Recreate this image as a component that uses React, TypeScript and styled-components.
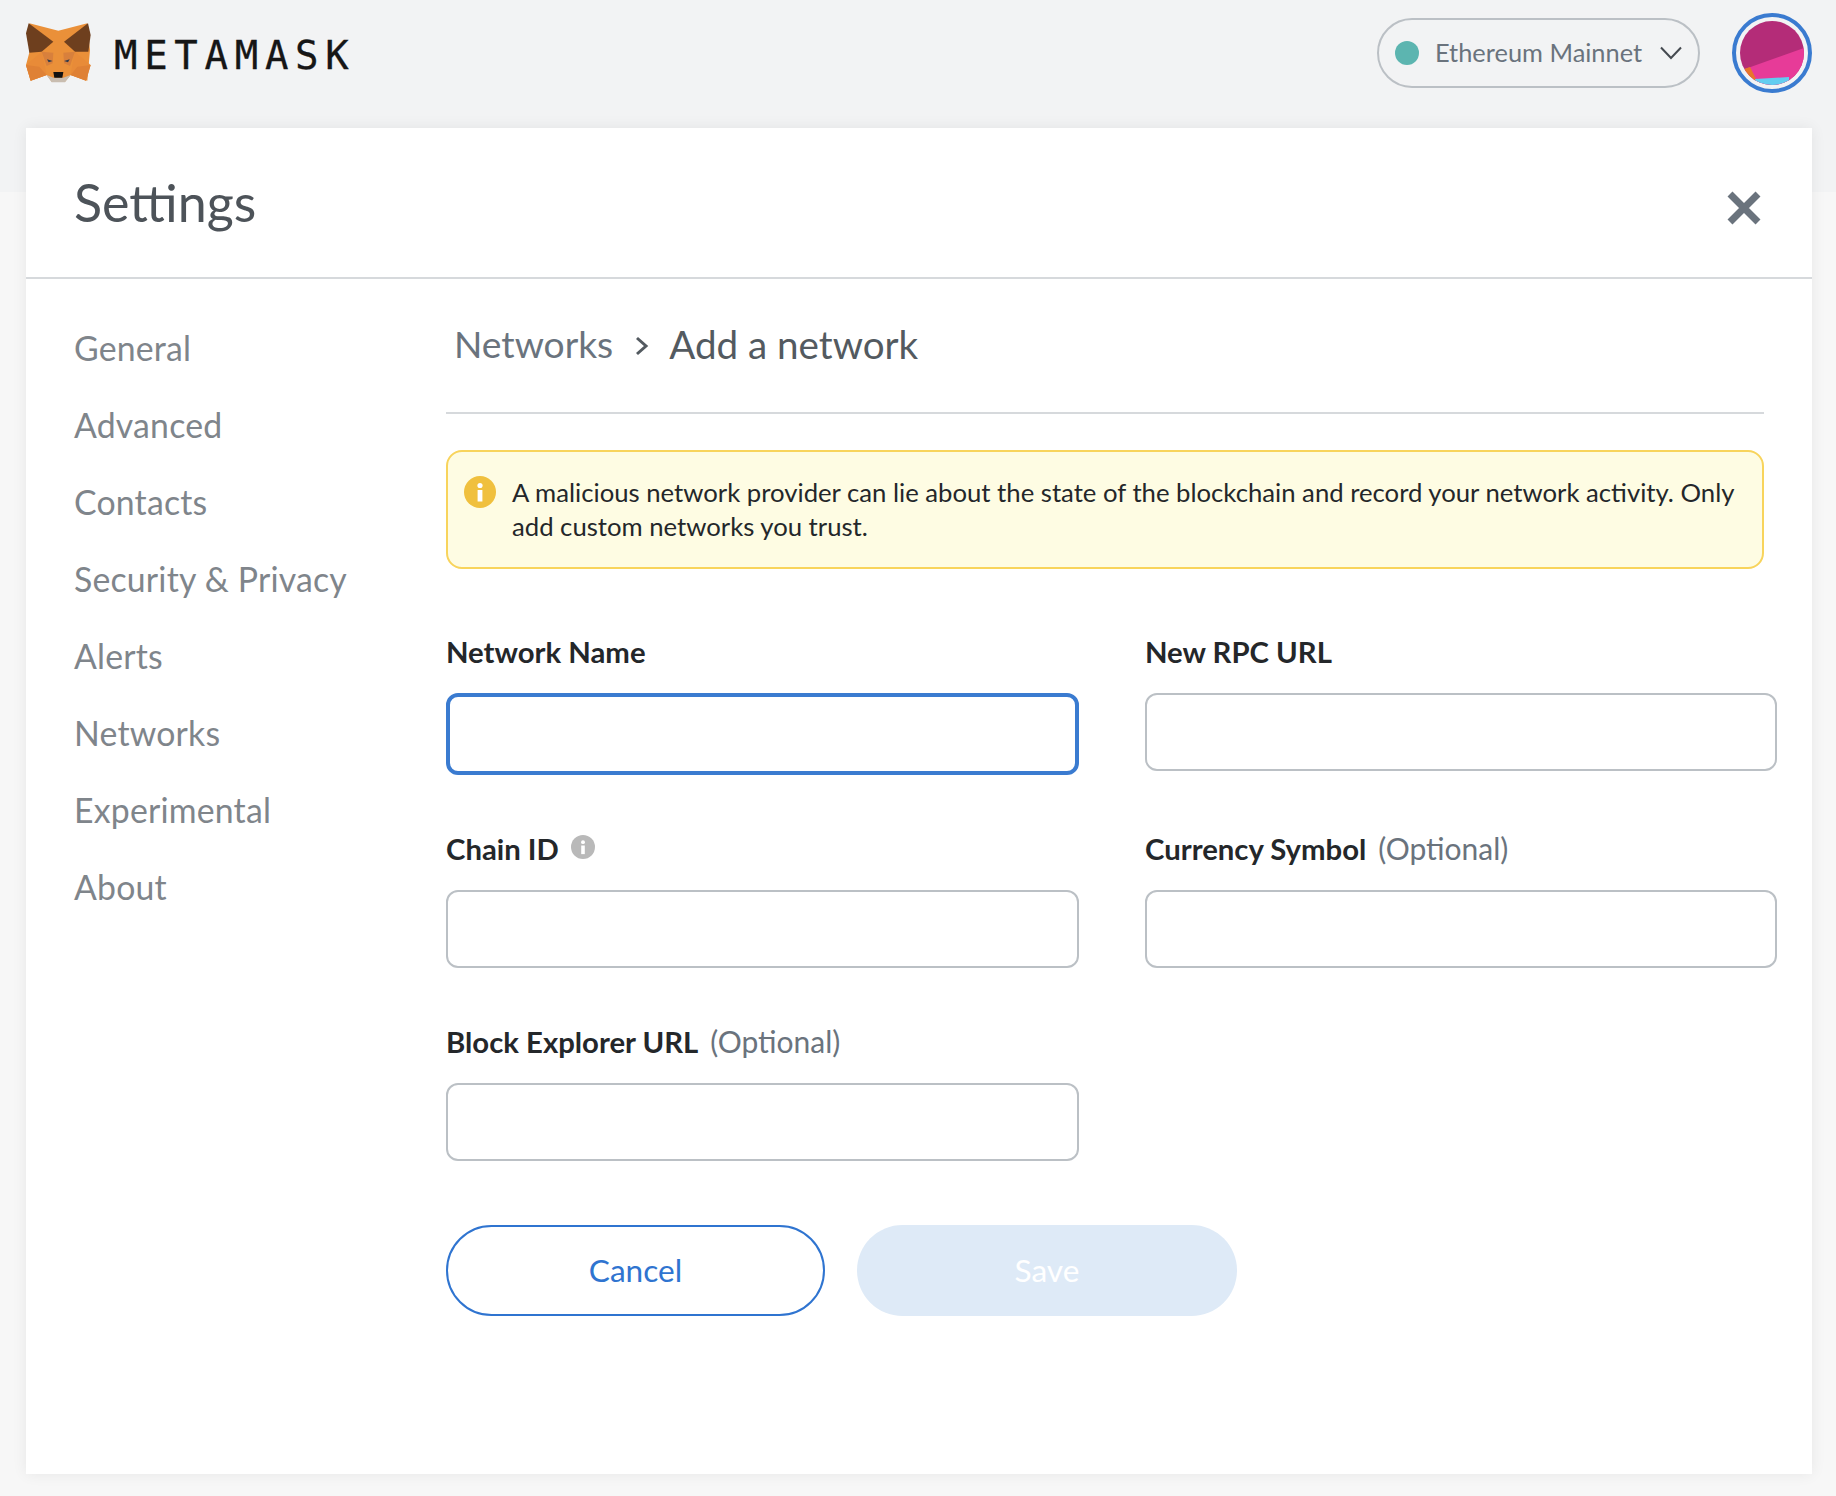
import React from "react";
import styled, { createGlobalStyle } from "styled-components";

const Global = createGlobalStyle`
  html, body { margin: 0; padding: 0; }
  body { background: #f7f7f7; font-family: "Lato", "Liberation Sans", sans-serif; color: #24272a; }
  * { box-sizing: border-box; }
`;

const Page = styled.div`
  width: 1836px;
  height: 1496px;
  overflow: hidden;
`;
const HeaderBand = styled.header`
  height: 192px;
  background: #f2f3f4;
  display: flex;
  align-items: flex-start;
  justify-content: space-between;
  padding: 13px 24px 0 26px;
`;
const Brand = styled.div`
  display: flex;
  align-items: center;
  height: 80px;
  gap: 23px;
`;
const Wordmark = styled.span`
  font-family: "DejaVu Sans Mono", monospace;
  font-size: 39px;
  letter-spacing: 6.7px;
  margin-top: 4px;
  color: #161616;
  -webkit-text-stroke: 0.3px #161616;
`;
const HeaderRight = styled.div`
  display: flex;
  align-items: center;
  gap: 32px;
  height: 80px;
`;
const NetworkPill = styled.div`
  width: 323px;
  height: 70px;
  border: 2px solid #bbc0c5;
  border-radius: 35px;
  display: flex;
  align-items: center;
  padding-left: 16px;
  font-size: 25.4px;
  color: #6a737d;
`;
const NetworkDot = styled.span`
  width: 24px;
  height: 24px;
  border-radius: 50%;
  background: #5cb5b0;
  margin-right: 16px;
`;
const NetworkName = styled.span`
  width: 225px;
  margin-top: -3px;
`;
const AvatarRing = styled.div`
  width: 80px;
  height: 80px;
  border: 4px solid #3a7bd0;
  border-radius: 50%;
  padding: 4px;
`;
const AvatarDisc = styled.div`
  width: 64px;
  height: 64px;
  border-radius: 50%;
  overflow: hidden;
  svg { display: block; }
`;
const Card = styled.main`
  margin: -64px 24px 0 26px;
  height: 1346px;
  background: #fff;
  box-shadow: 0 0 14px rgba(0, 0, 0, 0.07);
`;
const CardHeader = styled.div`
  height: 151px;
  border-bottom: 2px solid #d6d9dc;
  display: flex;
  align-items: center;
  justify-content: space-between;
  padding: 0 51px 0 48px;
`;
const Title = styled.h1`
  margin: -2px 0 0;
  font-size: 52px;
  font-weight: 400;
  color: #4d5359;
`;
const CloseButton = styled.button`
  border: 0;
  background: none;
  padding: 0;
  width: 34px;
  height: 34px;
  margin-top: 11px;
  svg { display: block; }
`;
const CardBody = styled.div`
  display: flex;
`;
const Sidebar = styled.nav`
  width: 420px;
  padding: 31px 0 0 48px;
  display: flex;
  flex-direction: column;
`;
const SideItem = styled.div`
  height: 77px;
  line-height: 77px;
  font-size: 33.8px;
  letter-spacing: 0.2px;
  color: #7f858b;
`;
const Content = styled.section`
  width: 1331px;
`;
const Breadcrumb = styled.div`
  width: 1318px;
  height: 135px;
  border-bottom: 2px solid #d6d9dc;
  padding: 40px 0 0 8px;
  display: flex;
  align-items: flex-start;
  font-size: 37.2px;
  line-height: 50px;
`;
const CrumbParent = styled.span`
  color: #6a737d;
`;
const CrumbArrow = styled.span`
  display: flex;
  align-items: center;
  height: 50px;
  margin: 2px 20px 0 22px;
`;
const CrumbCurrent = styled.span`
  font-size: 38.6px;
  color: #535a60;
`;
const Warning = styled.div`
  width: 1318px;
  height: 119px;
  margin-top: 36px;
  border: 2px solid #f8d45c;
  border-radius: 16px;
  background: #fefce3;
  display: flex;
  padding: 23px 20px 0 16px;
  gap: 16px;
  font-size: 25.7px;
  line-height: 34px;
  color: #24272a;
  svg { flex: none; margin-top: 1px; }
`;
const FormGrid = styled.div`
  display: grid;
  grid-template-columns: 633px 632px;
  column-gap: 66px;
  row-gap: 56px;
  margin-top: 65px;
`;
const Field = styled.div`
  display: flex;
  flex-direction: column;
  align-items: stretch;
`;
const FieldLabel = styled.div`
  display: flex;
  align-items: center;
  height: 34px;
  margin-bottom: 25px;
  font-size: 29.3px;
  font-weight: 700;
  color: #24272a;
  svg { margin-left: 12px; margin-top: -2px; }
`;
const Optional = styled.span`
  font-weight: 400;
  font-size: 30px;
  color: #6a737d;
  margin-left: 12px;
`;
const TextInput = styled.input<{ $focused?: boolean }>`
  width: 100%;
  height: ${(p) => (p.$focused ? "82px" : "78px")};
  border: ${(p) => (p.$focused ? "4px solid #3a7bd0" : "2px solid #bbc0c5")};
  border-radius: 12px;
  background: #fff;
  outline: none;
`;
const Actions = styled.div`
  display: flex;
  gap: 32px;
  margin-top: 64px;
`;
const Btn = styled.button<{ $primary?: boolean }>`
  width: ${(p) => (p.$primary ? "380px" : "379px")};
  height: 91px;
  padding: 0 0 2px;
  border-radius: 46px;
  border: ${(p) => (p.$primary ? "0" : "2px solid #2f74d0")};
  background: ${(p) => (p.$primary ? "#deeaf7" : "#fff")};
  color: ${(p) => (p.$primary ? "#fff" : "#2f74d0")};
  font-family: inherit;
  font-size: 31.6px;
`;

const Fox = () => (
  <svg width="65" height="62" viewBox="78 66 195 186" aria-hidden="true">
    <polygon points="88,70 175,92 262,70 270,150 262,242 212,225 195,245 155,245 140,225 92,242 78,195 90,150" fill="#ea9039" />
    <polygon points="86,70 160,125 125,155 88,158 78,100" fill="#6e3f1e" />
    <polygon points="264,70 272,105 265,155 225,155 192,125" fill="#6e3f1e" />
    <polygon points="125,155 78,195 92,242 140,225 130,175" fill="#e88b38" />
    <polygon points="225,155 272,195 258,242 212,225 220,175" fill="#e88b38" />
    <polygon points="118,200 78,195 92,242 140,225" fill="#df8135" />
    <polygon points="232,200 272,195 258,242 212,225" fill="#df8135" />
    <polygon points="125,155 160,158 158,190 140,198" fill="#d8803c" />
    <polygon points="225,155 190,158 192,190 210,198" fill="#d8803c" />
    <polygon points="141,178 158,183 146,187" fill="#2f3a4d" />
    <polygon points="209,178 192,183 204,187" fill="#2f3a4d" />
    <polygon points="140,225 160,233 190,233 212,225 195,247 155,247" fill="#c9bdb0" />
    <polygon points="160,216 190,216 187,233 163,233" fill="#111" />
  </svg>
);

const Chevron = () => (
  <svg width="22" height="14" viewBox="0 0 22 14" aria-hidden="true">
    <path d="M1 1.5 L11 12 L21 1.5" fill="none" stroke="#454a50" strokeWidth="2" />
  </svg>
);

const Avatar = () => (
  <svg width="64" height="64" viewBox="0 0 64 64" aria-hidden="true">
    <rect width="64" height="64" fill="#b42c78" />
    <polygon points="64,27 5,48 15,64 64,64" fill="#e73b98" />
    <polygon points="4,48 10,46 16,58 14,62" fill="#e8762a" />
    <polygon points="15,58 49,56 49,64 15,64" fill="#62cdf0" />
  </svg>
);

const CloseIcon = () => (
  <svg width="34" height="34" viewBox="0 0 34 34" aria-hidden="true">
    <path d="M3 3 L31 31 M31 3 L3 31" stroke="#6a737d" strokeWidth="7" />
  </svg>
);

const CrumbIcon = () => (
  <svg width="14" height="20" viewBox="0 0 14 20" aria-hidden="true">
    <path d="M2 2 L11 10 L2 18" fill="none" stroke="#535a60" strokeWidth="3" />
  </svg>
);

const InfoIcon = ({ size, color }: { size: number; color: string }) => (
  <svg width={size} height={size} viewBox="0 0 32 32" aria-hidden="true">
    <circle cx="16" cy="16" r="16" fill={color} />
    <circle cx="16" cy="9.5" r="2.6" fill="#fff" />
    <rect x="13.6" y="14" width="4.8" height="11.5" fill="#fff" />
  </svg>
);

const sideItems = ["General", "Advanced", "Contacts", "Security & Privacy", "Alerts", "Networks", "Experimental", "About"];

export default function App() {
  return (
    <Page>
      <Global />
      <HeaderBand>
        <Brand>
          <Fox />
          <Wordmark>METAMASK</Wordmark>
        </Brand>
        <HeaderRight>
          <NetworkPill>
            <NetworkDot />
            <NetworkName>Ethereum Mainnet</NetworkName>
            <Chevron />
          </NetworkPill>
          <AvatarRing>
            <AvatarDisc>
              <Avatar />
            </AvatarDisc>
          </AvatarRing>
        </HeaderRight>
      </HeaderBand>
      <Card>
        <CardHeader>
          <Title>Settings</Title>
          <CloseButton aria-label="Close">
            <CloseIcon />
          </CloseButton>
        </CardHeader>
        <CardBody>
          <Sidebar>
            {sideItems.map((s) => (
              <SideItem key={s}>{s}</SideItem>
            ))}
          </Sidebar>
          <Content>
            <Breadcrumb>
              <CrumbParent>Networks</CrumbParent>
              <CrumbArrow>
                <CrumbIcon />
              </CrumbArrow>
              <CrumbCurrent>Add a network</CrumbCurrent>
            </Breadcrumb>
            <Warning>
              <InfoIcon size={32} color="#f0c03e" />
              <div>
                A malicious network provider can lie about the state of the blockchain and record your network activity. Only add custom networks you trust.
              </div>
            </Warning>
            <FormGrid>
              <Field>
                <FieldLabel>Network Name</FieldLabel>
                <TextInput $focused />
              </Field>
              <Field>
                <FieldLabel>New RPC URL</FieldLabel>
                <TextInput />
              </Field>
              <Field>
                <FieldLabel>
                  Chain ID
                  <InfoIcon size={24} color="#b9b9b9" />
                </FieldLabel>
                <TextInput />
              </Field>
              <Field>
                <FieldLabel>
                  Currency Symbol<Optional>(Optional)</Optional>
                </FieldLabel>
                <TextInput />
              </Field>
              <Field>
                <FieldLabel>
                  Block Explorer URL<Optional>(Optional)</Optional>
                </FieldLabel>
                <TextInput />
              </Field>
            </FormGrid>
            <Actions>
              <Btn>Cancel</Btn>
              <Btn $primary>Save</Btn>
            </Actions>
          </Content>
        </CardBody>
      </Card>
    </Page>
  );
}
